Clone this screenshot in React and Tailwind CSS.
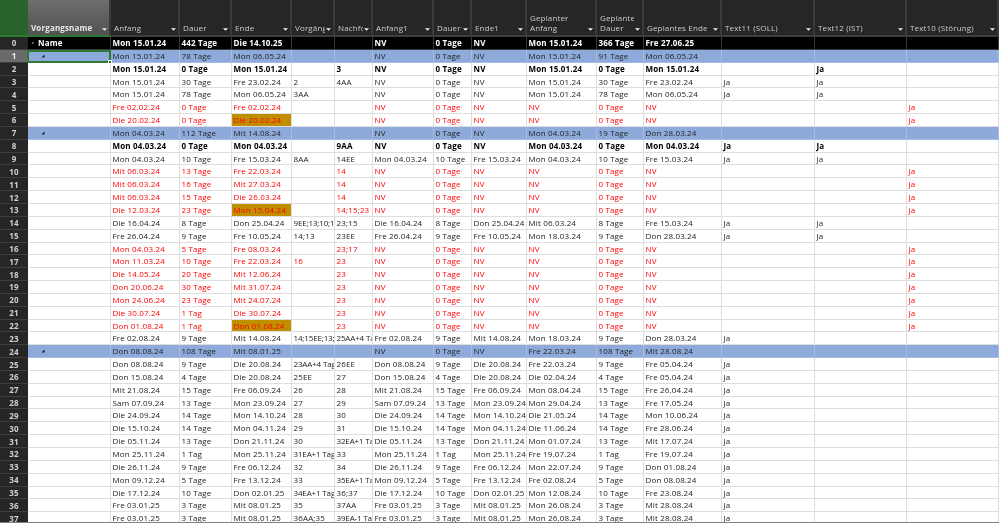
const GRID = "grid grid-cols-[28px_83px_69px_52px_60px_43px_38px_61px_38px_55px_70px_47px_78px_93px_92px_92px]";

const H = [
  ["Anfang"], ["Dauer"], ["Ende"], ["Vorgänger"], ["Nachfolger"], ["Anfang1"], ["Dauer1"], ["Ende1"],
  ["Geplanter", "Anfang"], ["Geplante", "Dauer"], ["Geplantes Ende"], ["Text11 (SOLL)"], ["Text12 (IST)"], ["Text10 (Störung)"],
];

const nv = ["NV", "0 Tage", "NV"];
const red = (a, d, e, v = "", n = "", gold = false) => ({ k: "r", gold, c: [a, d, e, v, n, ...nv, "NV", "0 Tage", "NV", "", "", "Ja"] });
const same = (a, d, e, v, n, ga, ge, t11 = "Ja") => ({ k: "n", c: [a, d, e, v, n, a, d, e, ga, d, ge, t11, "", ""] });

const ROWS = [
  { k: "k", c: ["Mon 15.01.24", "442 Tage", "Die 14.10.25", "", "", ...nv, "Mon 15.01.24", "366 Tage", "Fre 27.06.25", "", "", ""] },
  { k: "b", c: ["Mon 15.01.24", "78 Tage", "Mon 06.05.24", "", "", ...nv, "Mon 15.01.24", "91 Tage", "Mon 06.05.24", "", "", ""] },
  { k: "s", c: ["Mon 15.01.24", "0 Tage", "Mon 15.01.24", "", "3", ...nv, "Mon 15.01.24", "0 Tage", "Mon 15.01.24", "", "Ja", ""] },
  { k: "n", c: ["Mon 15.01.24", "30 Tage", "Fre 23.02.24", "2", "4AA", ...nv, "Mon 15.01.24", "30 Tage", "Fre 23.02.24", "Ja", "Ja", ""] },
  { k: "n", c: ["Mon 15.01.24", "78 Tage", "Mon 06.05.24", "3AA", "", ...nv, "Mon 15.01.24", "78 Tage", "Mon 06.05.24", "Ja", "Ja", ""] },
  red("Fre 02.02.24", "0 Tage", "Fre 02.02.24"),
  red("Die 20.02.24", "0 Tage", "Die 20.02.24", "", "", true),
  { k: "b", c: ["Mon 04.03.24", "112 Tage", "Mit 14.08.24", "", "", ...nv, "Mon 04.03.24", "19 Tage", "Don 28.03.24", "", "", ""] },
  { k: "s", c: ["Mon 04.03.24", "0 Tage", "Mon 04.03.24", "", "9AA", ...nv, "Mon 04.03.24", "0 Tage", "Mon 04.03.24", "Ja", "Ja", ""] },
  { k: "n", c: ["Mon 04.03.24", "10 Tage", "Fre 15.03.24", "8AA", "14EE", "Mon 04.03.24", "10 Tage", "Fre 15.03.24", "Mon 04.03.24", "10 Tage", "Fre 15.03.24", "Ja", "Ja", ""] },
  red("Mit 06.03.24", "13 Tage", "Fre 22.03.24", "", "14"),
  red("Mit 06.03.24", "16 Tage", "Mit 27.03.24", "", "14"),
  red("Mit 06.03.24", "15 Tage", "Die 26.03.24", "", "14"),
  red("Die 12.03.24", "23 Tage", "Mon 15.04.24", "", "14;15;23", true),
  { k: "n", c: ["Die 16.04.24", "8 Tage", "Don 25.04.24", "9EE;13;10;1", "23;15", "Die 16.04.24", "8 Tage", "Don 25.04.24", "Mit 06.03.24", "8 Tage", "Fre 15.03.24", "Ja", "Ja", ""] },
  { k: "n", c: ["Fre 26.04.24", "9 Tage", "Fre 10.05.24", "14;13", "23EE", "Fre 26.04.24", "9 Tage", "Fre 10.05.24", "Mon 18.03.24", "9 Tage", "Don 28.03.24", "Ja", "Ja", ""] },
  red("Mon 04.03.24", "5 Tage", "Fre 08.03.24", "", "23;17"),
  red("Mon 11.03.24", "10 Tage", "Fre 22.03.24", "16", "23"),
  red("Die 14.05.24", "20 Tage", "Mit 12.06.24", "", "23"),
  red("Don 20.06.24", "30 Tage", "Mit 31.07.24", "", "23"),
  red("Mon 24.06.24", "23 Tage", "Mit 24.07.24", "", "23"),
  red("Die 30.07.24", "1 Tag", "Die 30.07.24", "", "23"),
  red("Don 01.08.24", "1 Tag", "Don 01.08.24", "", "23", true),
  same("Fre 02.08.24", "9 Tage", "Mit 14.08.24", "14;15EE;13;", "25AA+4 Ta", "Mon 18.03.24", "Don 28.03.24"),
  { k: "b", c: ["Don 08.08.24", "108 Tage", "Mit 08.01.25", "", "", ...nv, "Fre 22.03.24", "108 Tage", "Mit 28.08.24", "", "", ""] },
  same("Don 08.08.24", "9 Tage", "Die 20.08.24", "23AA+4 Tag", "26EE", "Fre 22.03.24", "Fre 05.04.24"),
  same("Don 15.08.24", "4 Tage", "Die 20.08.24", "25EE", "27", "Die 02.04.24", "Fre 05.04.24"),
  same("Mit 21.08.24", "15 Tage", "Fre 06.09.24", "26", "28", "Mon 08.04.24", "Fre 26.04.24"),
  same("Sam 07.09.24", "13 Tage", "Mon 23.09.24", "27", "29", "Mon 29.04.24", "Fre 17.05.24"),
  same("Die 24.09.24", "14 Tage", "Mon 14.10.24", "28", "30", "Die 21.05.24", "Mon 10.06.24"),
  same("Die 15.10.24", "14 Tage", "Mon 04.11.24", "29", "31", "Die 11.06.24", "Fre 28.06.24"),
  same("Die 05.11.24", "13 Tage", "Don 21.11.24", "30", "32EA+1 Ta", "Mon 01.07.24", "Mit 17.07.24"),
  same("Mon 25.11.24", "1 Tag", "Mon 25.11.24", "31EA+1 Tag", "33", "Fre 19.07.24", "Fre 19.07.24"),
  same("Die 26.11.24", "9 Tage", "Fre 06.12.24", "32", "34", "Mon 22.07.24", "Don 01.08.24"),
  same("Mon 09.12.24", "5 Tage", "Fre 13.12.24", "33", "35EA+1 Ta", "Fre 02.08.24", "Don 08.08.24"),
  same("Die 17.12.24", "10 Tage", "Don 02.01.25", "34EA+1 Tag", "36;37", "Mon 12.08.24", "Fre 23.08.24"),
  same("Fre 03.01.25", "3 Tage", "Mit 08.01.25", "35", "37AA", "Mon 26.08.24", "Mit 28.08.24"),
  same("Fre 03.01.25", "3 Tage", "Mit 08.01.25", "36AA;35", "39EA-1 Ta", "Mon 26.08.24", "Mit 28.08.24"),
];

const STYLE = {
  k: { row: "bg-black text-white font-bold", cell: "border-[#3c3c3c]" },
  b: { row: "bg-[#8eaadb] text-[#1f1f1f]", cell: "border-[#a6bce2]" },
  s: { row: "bg-white text-black font-bold", cell: "border-[#dedede]" },
  n: { row: "bg-white text-[#222222]", cell: "border-[#dedede]" },
  r: { row: "bg-white text-[#ff0000]", cell: "border-[#dedede]" },
};

function Caret({ className }) {
  return (
    <svg viewBox="0 0 5 5" className={className}>
      <path d="M4.5 0.5V4.5H0.5Z" fill="currentColor" />
    </svg>
  );
}

function FilterArrow() {
  return (
    <svg viewBox="0 0 6 3" className="w-[5px] h-[3px] shrink-0 mb-[2px]">
      <path d="M0 0H6L3 3Z" fill="#f0f0f0" />
    </svg>
  );
}

function HeaderCell({ lines, active }) {
  return (
    <div
      className={
        "flex items-end gap-[1px] pl-[3px] pr-[2px] pb-[2px] border-r-2 border-r-[#3a3a3a] overflow-hidden " +
        (active ? "bg-gradient-to-b from-[#6e6e6e] to-[#525252] border-b-2 border-b-[#2f7a32]" : "border-b-2 border-b-[#3e3e3e]")
      }
    >
      <div className={"flex-1 min-w-0 overflow-hidden whitespace-nowrap leading-[10px] " + (active ? "font-bold text-[#e8e8e8]" : "text-[#cccccc]")}>
        {lines.map((l) => (
          <div key={l}>{l}</div>
        ))}
      </div>
      <FilterArrow />
    </div>
  );
}

function Row({ row, i }) {
  const st = STYLE[row.k];
  return (
    <div className={GRID + " h-[12.85px] shrink-0 leading-[11px] " + st.row}>
      <div
        className={
          "flex items-center justify-center font-bold border-b border-[#3e3e3e] " +
          (i === 1 ? "bg-[#6a6a6a] text-[#f0f0f0]" : "bg-[#262626] text-[#d0d0d0]")
        }
      >
        {i}
      </div>
      <div className={"relative flex items-center border-r border-b " + st.cell}>
        {i === 0 && (
          <>
            <Caret className="w-[3px] h-[3px] ml-[3px] text-[#909090]" />
            <span className="ml-[4px]">Name</span>
          </>
        )}
        {row.k === "b" && <Caret className="w-[4px] h-[4px] ml-[13px] text-[#222222]" />}
        {i === 1 && (
          <div className="absolute -left-[1px] top-0 right-[-1px] bottom-[-1px] border-2 border-[#2f7a32]">
            <div className="absolute right-[-3px] bottom-[-3px] w-[4px] h-[4px] bg-[#2f7a32] border border-white" />
          </div>
        )}
      </div>
      {row.c.map((t, j) => (
        <div
          key={j}
          className={
            "pl-[1.5px] overflow-hidden whitespace-nowrap border-r border-b " +
            st.cell +
            (row.gold && j === 2 ? " bg-[#bf8f00]" : "") +
            ((j === 3 || j === 4) && t.length >= 9 ? " tracking-[-0.15px]" : "")
          }
        >
          {t}
        </div>
      ))}
    </div>
  );
}

export default function App() {
  return (
    <div className="w-[999px] h-[523px] overflow-hidden flex flex-col bg-white border-b border-[#808080] text-[8px] font-['Open_Sans','Noto_Sans',sans-serif] tracking-[0.15px] blur-[0.25px]">
      <div className={GRID + " h-[37px] shrink-0 bg-[#262626]"}>
        <div className="bg-[#27632a] border-b-2 border-[#2f7a32]" />
        <HeaderCell lines={["Vorgangsname"]} active />
        {H.map((lines) => (
          <HeaderCell key={lines.join()} lines={lines} />
        ))}
      </div>
      <div className="flex-1 min-h-0 overflow-hidden">
        {ROWS.map((r, i) => (
          <Row key={i} row={r} i={i} />
        ))}
      </div>
    </div>
  );
}
